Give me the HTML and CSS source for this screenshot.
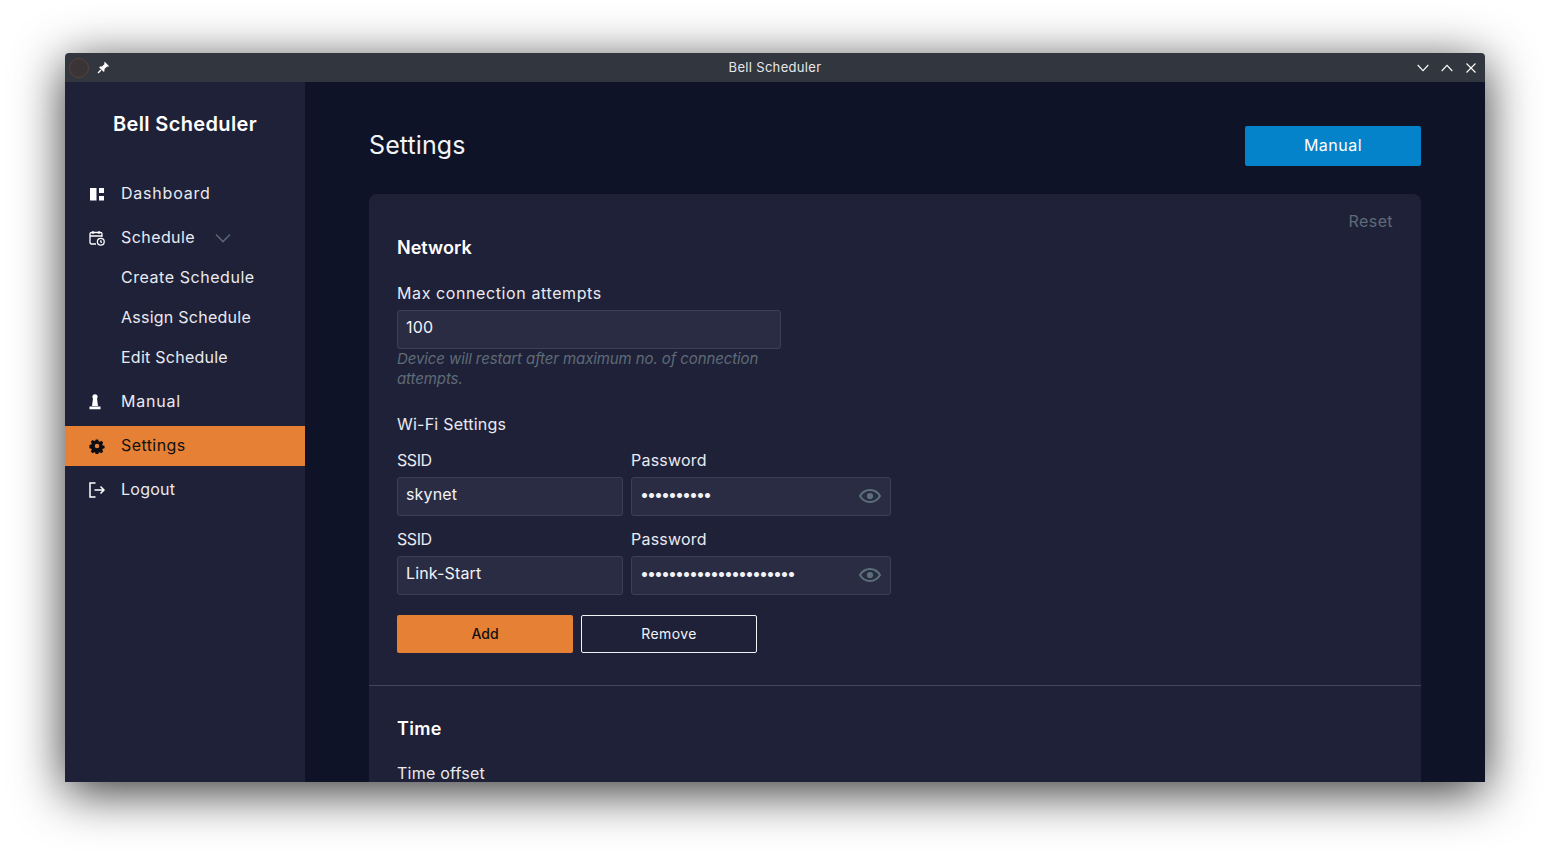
FILE: index.html
```html
<!DOCTYPE html>
<html lang="en">
<head>
<meta charset="utf-8">
<title>Bell Scheduler</title>
<link rel="stylesheet" href="styles.css">
</head>
<body>
<div class="window">
  <header class="titlebar">
    <div class="tb-left">
      <span class="app-icon"></span>
      <svg class="pin" viewBox="0 0 12 12" width="13" height="13"><path d="M7.2 0.800 11.200 4.800 10.200 5.400 9.300 5 6.900 7.400 6.900 9.400 6 10 2 6 2.600 5.100 4.600 5.100 7 2.700 6.600 1.800Z" fill="#fff"/><path d="M3.600 8.400 1 11" stroke="#fff" stroke-width="1.300" fill="none"/></svg>
    </div>
    <div class="tb-title">Bell Scheduler</div>
    <div class="tb-right">
      <svg viewBox="0 0 12 8" width="12" height="8"><path d="M.7 1 6 6.600 11.300 1" stroke="#fff" stroke-width="1.100" fill="none"/></svg>
      <svg viewBox="0 0 12 8" width="12" height="8"><path d="M.7 7 6 1.400 11.300 7" stroke="#fff" stroke-width="1.100" fill="none"/></svg>
      <svg viewBox="0 0 10 10" width="10" height="10"><path d="M.5.5 9.500 9.500M9.500.5.5 9.500" stroke="#fff" stroke-width="1.100" fill="none"/></svg>
    </div>
  </header>
  <div class="app">
    <aside class="sidebar">
      <h1 class="brand">Bell Scheduler</h1>
      <nav class="nav">
        <a class="nav-item">
          <svg class="nav-icon" viewBox="0 0 16 16"><path d="M1 2h6.500v12.500H1zM10 2h5v5h-5zM10 10h5v4.500h-5z" fill="#fff"/></svg>
          <span class="wide">Dashboard</span>
        </a>
        <div class="nav-group">
          <a class="nav-item">
            <svg class="nav-icon" viewBox="0 0 16 16" fill="none" stroke="#fff" stroke-width="1.300"><path d="M7 14H2.500A1.500 1.500 0 0 1 1 12.500V4a1.500 1.500 0 0 1 1.500-1.500h9A1.500 1.500 0 0 1 13 4v3M1 6h12M4 1v3M10 1v3"/><circle cx="11.800" cy="11.800" r="3.400"/><path d="M11.800 10.200v1.700l1.100.6"/></svg>
            <span>Schedule</span>
            <svg class="caret" viewBox="0 0 16 10" width="16" height="10"><path d="M1 1.500 8 8.500 15 1.500" stroke="#566673" stroke-width="1.600" fill="none"/></svg>
          </a>
          <a class="nav-sub wider">Create Schedule</a>
          <a class="nav-sub narrow">Assign Schedule</a>
          <a class="nav-sub narrow">Edit Schedule</a>
        </div>
        <a class="nav-item">
          <svg class="nav-icon" viewBox="0 0 16 16"><circle cx="6" cy="2.800" r="2.600" fill="#fff"/><path d="M4 4.500h4l1 7.500H3zM0.500 12.500h11v2.800H.5z" fill="#fff"/></svg>
          <span class="wide">Manual</span>
        </a>
        <a class="nav-item active">
          <svg class="nav-icon" viewBox="0 0 16 16"><path fill-rule="evenodd" d="M6.600.8h2.800l.4 2 1.300.6 1.800-1.100 2 2-1.100 1.800.6 1.300 2 .4v2.800l-2 .4-.6 1.300 1.100 1.800-2 2-1.800-1.100-1.300.6-.4 2H6.600l-.4-2-1.300-.6-1.800 1.100-2-2 1.100-1.800-.6-1.300-2-.4V6.800l2-.4.6-1.300-1.100-1.800 2-2 1.800 1.100 1.300-.6zM8 5.600a2.500 2.500 0 1 0 0 5 2.500 2.500 0 0 0 0-5z" transform="translate(.8 .8) scale(.9)" fill="#0d0d14"/></svg>
          <span>Settings</span>
        </a>
        <a class="nav-item">
          <svg class="nav-icon" viewBox="0 0 16 16" fill="none" stroke="#fff" stroke-width="1.500"><path d="M6.500 1H1v14h5.500M5.500 8H15M11.500 4.500 15 8l-3.500 3.500"/></svg>
          <span class="narrow">Logout</span>
        </a>
      </nav>
    </aside>
    <main class="main">
      <div class="page-head">
        <h2 class="page-title">Settings</h2>
        <button class="btn btn-blue" type="button">Manual</button>
      </div>
      <section class="card">
        <div class="card-block">
          <a class="reset">Reset</a>
          <h3 class="section-title">Network</h3>
          <label class="label label-long">Max connection attempts</label>
          <input class="input input-wide" type="text" value="100">
          <p class="hint">Device will restart after maximum no. of connection attempts.</p>
          <div class="subhead">Wi-Fi Settings</div>
          <div class="wifi-row">
            <div class="field">
              <label class="label label-short">SSID</label>
              <input class="input input-ssid" type="text" value="skynet">
            </div>
            <div class="field">
              <label class="label">Password</label>
              <div class="pw">
                <input class="input input-pw" type="password" value="abcdefghij">
                <svg class="eye" viewBox="0 0 24 16" width="24" height="16"><path d="M2 8C4.500 3.800 8 2 12 2S19.500 3.800 22 8C19.500 12.200 16 14 12 14S4.500 12.200 2 8Z" fill="none" stroke="#5c7078" stroke-width="2"/><circle cx="12" cy="8" r="3.100" fill="#5c7078"/></svg>
              </div>
            </div>
          </div>
          <div class="wifi-row">
            <div class="field">
              <label class="label label-short">SSID</label>
              <input class="input input-ssid" type="text" value="Link-Start">
            </div>
            <div class="field">
              <label class="label">Password</label>
              <div class="pw">
                <input class="input input-pw" type="password" value="abcdefghijklmnopqrstuv">
                <svg class="eye" viewBox="0 0 24 16" width="24" height="16"><path d="M2 8C4.500 3.800 8 2 12 2S19.500 3.800 22 8C19.500 12.200 16 14 12 14S4.500 12.200 2 8Z" fill="none" stroke="#5c7078" stroke-width="2"/><circle cx="12" cy="8" r="3.100" fill="#5c7078"/></svg>
              </div>
            </div>
          </div>
          <div class="actions">
            <button class="btn btn-orange" type="button">Add</button>
            <button class="btn btn-outline" type="button">Remove</button>
          </div>
        </div>
        <div class="card-block time-block">
          <h3 class="section-title">Time</h3>
          <label class="label">Time offset</label>
        </div>
      </section>
    </main>
  </div>
</div>
</body>
</html>
```
FILE: styles.css
```css
* { box-sizing: border-box; }
html, body { height: 100%; }
body {
  margin: 0;
  padding: 53px 65px 77px;
  background: #fff;
  overflow: hidden;
  font-family: "Inter", "Liberation Sans", sans-serif;
  font-size: 16px;
  color: #e9eaf0;
}
.window {
  height: 729px;
  display: flex;
  flex-direction: column;
  border-radius: 4px 4px 0 0;
  box-shadow: 0 10px 50px rgba(0, 0, 0, .8);
  overflow: hidden;
}
.titlebar {
  height: 29px;
  flex: none;
  background: #31363f;
  display: grid;
  grid-template-columns: 1fr auto 1fr;
  align-items: center;
  padding: 0 8px;
  color: #e6e7ea;
  font-size: 13px;
}
.tb-title { letter-spacing: .32px; padding-bottom: 2px; }
.tb-left { display: flex; align-items: center; gap: 8px; margin-left: -4px; }
.pin { display: block; }
.app-icon {
  width: 20px;
  height: 20px;
  border-radius: 50%;
  background: #3a3436;
  border: 1px solid #5a4238;
}
.tb-right { display: flex; justify-content: flex-end; align-items: center; gap: 12px; }
.tb-right svg { display: block; }
.tb-right svg:last-child { margin: 0 1px; }
.app { flex: 1; min-height: 0; display: flex; }
.sidebar { width: 240px; flex: none; background: #1f2139; }
.brand {
  margin: 0;
  padding-top: 29px;
  height: 92px;
  line-height: 26px;
  text-align: center;
  font-size: 20px;
  font-weight: 600;
  letter-spacing: .36px;
  color: #fff;
}
.nav { display: flex; flex-direction: column; gap: 4px; }
.nav-item {
  height: 40px;
  display: flex;
  align-items: center;
  padding-left: 24px;
  color: #e9eaf0;
  letter-spacing: .42px;
}
.nav-item span { margin-bottom: 2px; }
.nav-item.active { background: #e68034; color: #111; }
.nav-icon { width: 16px; height: 16px; margin-right: 16px; flex: none; }
.caret { margin-left: 20px; }
.nav-sub {
  height: 40px;
  display: flex;
  align-items: center;
  padding: 0 0 2px 56px;
  color: #e9eaf0;
}
.wide { letter-spacing: .78px; }
.wider { letter-spacing: .55px; }
.nav-item .narrow, .nav-sub.narrow { letter-spacing: .25px; }
.main {
  flex: 1;
  min-width: 0;
  background: #0e1327;
  padding: 44px 64px 0;
  overflow: hidden;
}
.page-head {
  display: flex;
  justify-content: space-between;
  align-items: center;
  height: 40px;
  margin-bottom: 28px;
}
.page-title { margin: 0 0 2px; font-size: 25px; font-weight: 400; letter-spacing: .1px; color: #f2f3f6; }
.btn {
  font: inherit;
  width: 176px;
  border-radius: 2px;
  border: 0;
  padding: 0 0 2px;
  cursor: pointer;
}
.btn-blue { height: 40px; background: #0583ca; color: #fff; letter-spacing: .5px; }
.card { background: #1f2139; border-radius: 8px 8px 0 0; min-height: 700px; }
.card-block { position: relative; padding: 40px 28px 32px; }
.reset { position: absolute; top: 16px; right: 28px; color: #5e6b76; line-height: 22px; letter-spacing: .4px; }
.section-title { margin: 0 0 19px; font-size: 18px; line-height: 28px; font-weight: 600; letter-spacing: .03px; color: #fff; }
.label { display: block; line-height: 24px; margin-bottom: 5px; color: #e9eaf0; letter-spacing: .22px; }
.label-long { letter-spacing: .6px; }
.label-short { letter-spacing: -.45px; }
.input {
  display: block;
  height: 39px;
  padding: 0 8px 5px;
  background: #2a2c43;
  border: 1px solid #3c3f5a;
  border-radius: 3px;
  color: #f2f3f6;
  font: inherit;
  letter-spacing: .15px;
  outline: 0;
}
.input-wide { width: 384px; }
.input-ssid { width: 226px; }
.input-pw { width: 260px; padding-right: 44px; letter-spacing: -2px; }
.hint {
  width: 384px;
  margin: 0 0 23px;
  line-height: 20px;
  font-size: 15px;
  font-style: italic;
  letter-spacing: -.1px;
  color: #5e6b76;
}
.subhead { line-height: 24px; margin-bottom: 12px; letter-spacing: .22px; }
.wifi-row { display: flex; gap: 8px; margin-bottom: 11px; }
.pw { position: relative; }
.eye { position: absolute; right: 9px; top: 11px; }
.actions { display: flex; gap: 8px; margin-top: 20px; }
.btn-orange { height: 38px; background: #e68034; color: #111; font-size: 14px; font-weight: 500; }
.btn-outline { height: 38px; background: transparent; color: #f2f3f6; border: 1px solid #f2f3f6; font-size: 14px; letter-spacing: .4px; }
.time-block { border-top: 1px solid #43465c; padding-top: 29px; }
.time-block .section-title { margin-bottom: 18px; letter-spacing: .3px; }
```
